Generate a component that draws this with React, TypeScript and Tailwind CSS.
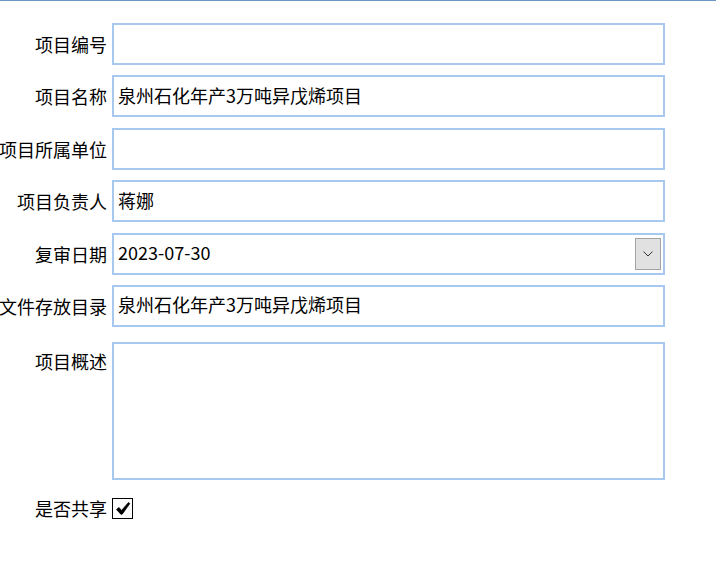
import { useState } from 'react'

type Field = {
    label: string,
    value: string,
    kind?: 'text' | 'date'
}

const fields: Field[] = [
    { label: '项目编号', value: '' },
    { label: '项目名称', value: '泉州石化年产3万吨异戊烯项目' },
    { label: '项目所属单位', value: '' },
    { label: '项目负责人', value: '蒋娜' },
    { label: '复审日期', value: '2023-07-30', kind: 'date' },
    { label: '文件存放目录', value: '泉州石化年产3万吨异戊烯项目' },
]

const font = { fontFamily: '"Microsoft YaHei", "Noto Sans CJK SC", sans-serif' }

const App = () => {
    const [shared, setShared] = useState(true)

    return <div className="w-[716px] h-[580px] bg-white border-t border-[#6b98c2] text-black text-[18px] leading-none" style={font}>
        <form action="#" className="pt-[22px] flex flex-col">
            <div className="flex flex-col gap-[10.4px]">
                {fields.map((f) => (
                    <div key={f.label} className="flex items-center h-[42px]">
                        <label className="w-[112px] shrink-0 pr-[5px] flex justify-end whitespace-nowrap">
                            {f.label}
                        </label>
                        <div className="w-[553px] h-[42px] border-2 border-[#a7c9f0] flex items-center pl-[4px] pr-[2px]">
                            <span className="flex-1 whitespace-nowrap pb-[3px]">{f.value}</span>
                            {f.kind === 'date' && (
                                <span className="w-[26px] h-[32px] bg-[#e1e1e1] border border-[#a3a3a3] flex items-center justify-center">
                                    <svg width="10" height="6" viewBox="0 0 10 6">
                                        <polyline points="0.5,0.5 5,5 9.5,0.5" fill="none" stroke="#333" strokeWidth="1" />
                                    </svg>
                                </span>
                            )}
                        </div>
                    </div>
                ))}
            </div>

            <div className="flex items-start mt-[15px]">
                <label className="w-[112px] shrink-0 pr-[5px] pt-[10px] flex justify-end whitespace-nowrap">
                    项目概述
                </label>
                <textarea className="w-[553px] h-[138px] border-2 border-[#a7c9f0] resize-none outline-none" />
            </div>

            <div className="flex items-center mt-[18px]">
                <label className="w-[112px] shrink-0 pr-[5px] flex justify-end whitespace-nowrap">
                    是否共享
                </label>
                <button
                    type="button"
                    onClick={() => setShared(!shared)}
                    className="w-[21px] h-[21px] border border-black flex items-center justify-center"
                >
                    {shared && (
                        <svg width="16" height="15" viewBox="0 0 16 15">
                            {/* heavy check: thick short arm, tapering long arm */}
                            <path
                                d="M1.5 8.5 L4 6.5 L6.5 9.5 L13.5 1.5 L14.8 2.6 L7.2 13.2 L5.8 13.2 Z"
                                fill="#000"
                                stroke="#000"
                                strokeWidth="0.8"
                                strokeLinejoin="round"
                            />
                        </svg>
                    )}
                </button>
            </div>
        </form>
    </div>
}

export default App
